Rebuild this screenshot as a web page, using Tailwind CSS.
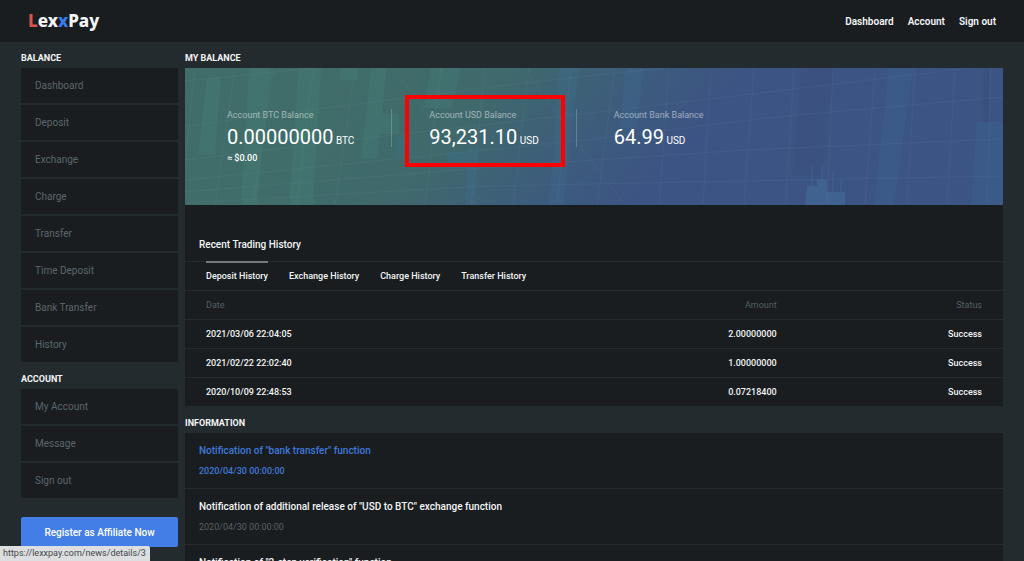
<!DOCTYPE html>
<html lang="en">
<head>
    <meta charset="UTF-8">
    <meta name="viewport" content="width=device-width, initial-scale=1.0">
    <title>LexxPay</title>
    <script src="https://cdn.jsdelivr.net/npm/@tailwindcss/browser@4"></script>
</head>
<body class="h-screen overflow-hidden bg-[#242b2e] font-['Roboto',sans-serif] text-[9px] font-medium text-gray-100">

    <header class="flex h-[42px] items-center justify-between bg-[#1a1d20] px-7">
        <a href="#" class="font-['Noto_Sans',sans-serif] text-[17px] leading-6 font-extrabold"><span class="text-[#d9534a]">L</span>ex<span class="text-[#3b7cea]">x</span>Pay</a>
        <nav class="flex gap-[14px] text-[10px] font-semibold">
            <a href="#">Dashboard</a>
            <a href="#">Account</a>
            <a href="#">Sign out</a>
        </nav>
    </header>

    <div class="flex gap-[7px] px-[21px]">
        <!-- sidebar -->
        <aside class="w-[157px] shrink-0">
            <h2 class="pt-[6px] leading-5 font-bold">BALANCE</h2>
            <ul class="divide-y-2 divide-[#242b2e] bg-[#191d1f] text-[10px] font-normal text-[#5c666e]">
                <li><a href="#" class="block px-[14px] leading-[35px]">Dashboard</a></li>
                <li><a href="#" class="block px-[14px] leading-[35px]">Deposit</a></li>
                <li><a href="#" class="block px-[14px] leading-[35px]">Exchange</a></li>
                <li><a href="#" class="block px-[14px] leading-[35px]">Charge</a></li>
                <li><a href="#" class="block px-[14px] leading-[35px]">Transfer</a></li>
                <li><a href="#" class="block px-[14px] leading-[35px]">Time Deposit</a></li>
                <li><a href="#" class="block px-[14px] leading-[35px]">Bank Transfer</a></li>
                <li><a href="#" class="block px-[14px] leading-[35px]">History</a></li>
            </ul>
            <h2 class="pt-[7px] leading-5 font-bold">ACCOUNT</h2>
            <ul class="divide-y-2 divide-[#242b2e] bg-[#191d1f] text-[10px] font-normal text-[#5c666e]">
                <li><a href="#" class="block px-[14px] leading-[35px]">My Account</a></li>
                <li><a href="#" class="block px-[14px] leading-[35px]">Message</a></li>
                <li><a href="#" class="block px-[14px] leading-[35px]">Sign out</a></li>
            </ul>
            <button class="mt-[19px] h-[30px] w-full rounded-xs bg-[#437ee6] text-[10px] text-white">Register as Affiliate Now</button>
        </aside>

        <main class="min-w-0 flex-1">
            <h2 class="pt-[6px] leading-5 font-bold">MY BALANCE</h2>
            <section class="relative flex h-[137px] overflow-hidden bg-[#3c5684] px-[42px] pt-[41px]">
                <svg class="absolute inset-0 h-full w-full" viewBox="0 0 818 137" preserveAspectRatio="none" aria-hidden="true">
                    <defs>
                        <linearGradient id="base" gradientUnits="userSpaceOnUse" x1="150" y1="0" x2="430" y2="240">
                            <stop offset="0" stop-color="#406d69"/>
                            <stop offset=".36" stop-color="#3f696c"/>
                            <stop offset=".64" stop-color="#3d5c7c"/>
                            <stop offset=".85" stop-color="#3c5483"/>
                        </linearGradient>
                    </defs>
                    <rect width="818" height="137" fill="url(#base)"/>
                    <!-- candle shadows -->
                    <g fill="#4c8f80" opacity=".2">
                        <path d="M22 10h14l-6 76H13z"/>
                        <path d="M64 0h22l-14 137H56z"/>
                        <path d="M114 0h22l-8 137h-24z"/>
                        <path d="M155 0h18v12h-18z"/>
                        <path d="M186 0h16l-10 90h-16z"/>
                        <path d="M246 0h30l-9 40h-28z"/>
                        <path d="M194 46h20v20h-26z"/>
                    </g>
                    <g fill="#3d7ba6" opacity=".16">
                        <path d="M210 70h18v20h-18z"/>
                        <path d="M262 84h22l-2 16h-20z"/>
                        <path d="M282 80h12l-4 57h-10z"/>
                        <path d="M374 0h20l-16 137h-14z"/>
                        <path d="M440 0h18l-6 60h-16z"/>
                        <path d="M704 0h24l-19 137h-20z"/>
                        <path d="M792 54h26v83h-32z"/>
                    </g>
                    <path d="M616 0h32l-12 108h-28z" fill="#383f68" opacity=".14"/>
                    <path d="M798 0h6v54h-6z" fill="#383f68" opacity=".2"/>
                    <path d="M622 118h10v-6h10v12h18v13h-40z" fill="#4578a8" opacity=".4"/>
                    <path d="M627 98v20M637 98v14M648 105v19M656 110v14" stroke="#4578a8" stroke-width="1" opacity=".4"/>
                    <!-- chart grid -->
                    <g fill="none" stroke="#8fa9c4" stroke-width="1" opacity=".08">
                        <path d="M0 13L130 0M0 58L330 16L480 0M0 92L200 68L500 34L818 -4M0 112L400 72L600 48L818 29M0 124L320 98L560 82L818 71M0 135L300 118L560 113L818 108"/>
                        <path d="M10 0L0 100M50 0L30 137M88 0L68 137M128 0L112 137M170 0L150 137M256 0L240 137M300 0L286 137M344 0L328 137M386 0L372 137M430 0L412 137M484 0L474 137M526 0L518 137M569 0L559 137M609 0L601 137M648 0L642 137M690 0L680 137M730 0L722 137M770 0L762 137M806 0L802 137"/>
                        <path d="M208 0L250 56M346 10L398 82L440 137"/>
                    </g>
                </svg>
                <div class="relative">
                    <p class="font-normal leading-3 text-white/50">Account BTC Balance</p>
                    <p class="mt-1 text-[10px] font-normal leading-6 text-white"><span class="text-xl leading-6">0.00000000</span> BTC</p>
                    <p class="leading-[10px] text-white">≈ $0.00</p>
                </div>
                <div class="relative mx-[37px] h-[38px] w-px shrink-0 bg-white/20"></div>
                <div class="relative">
                    <p class="font-normal leading-3 text-white/50">Account USD Balance</p>
                    <p class="mt-1 text-[10px] font-normal leading-6 text-white"><span class="text-xl leading-6">93,231.10</span> USD</p>
                    <div class="absolute -top-[14px] -right-[26px] -left-6 h-[72px] border-[4px] border-[#ff0000]"></div>
                </div>
                <div class="relative mx-[37px] h-[38px] w-px shrink-0 bg-white/20"></div>
                <div class="relative">
                    <p class="font-normal leading-3 text-white/50">Account Bank Balance</p>
                    <p class="mt-1 text-[10px] font-normal leading-6 text-white"><span class="text-xl leading-6">64.99</span> USD</p>
                </div>
            </section>

            <section class="bg-[#191d1f] pt-6">
                <h3 class="border-b border-[#242a2d] px-[14px] text-[10px] leading-8">Recent Trading History</h3>
                <div class="-mt-px flex gap-[21px] border-b border-[#242a2d] px-[21px] leading-[27px]">
                    <a href="#" class="border-t-2 border-[#74787b]">Deposit History</a>
                    <a href="#" class="border-t-2 border-transparent">Exchange History</a>
                    <a href="#" class="border-t-2 border-transparent">Charge History</a>
                    <a href="#" class="border-t-2 border-transparent">Transfer History</a>
                </div>
                <table class="w-full table-fixed leading-7">
                    <thead class="text-[#545d64]">
                        <tr class="border-b border-[#242a2d]">
                            <th class="w-1/3 pl-[21px] text-left font-normal">Date</th>
                            <th class="w-[39%] text-right font-normal">Amount</th>
                            <th class="pr-[21px] text-right font-normal">Status</th>
                        </tr>
                    </thead>
                    <tbody class="divide-y divide-[#242a2d]">
                        <tr>
                            <td class="pl-[21px]">2021/03/06 22:04:05</td>
                            <td class="text-right">2.00000000</td>
                            <td class="pr-[21px] text-right">Success</td>
                        </tr>
                        <tr>
                            <td class="pl-[21px]">2021/02/22 22:02:40</td>
                            <td class="text-right">1.00000000</td>
                            <td class="pr-[21px] text-right">Success</td>
                        </tr>
                        <tr>
                            <td class="pl-[21px]">2020/10/09 22:48:53</td>
                            <td class="text-right">0.07218400</td>
                            <td class="pr-[21px] text-right">Success</td>
                        </tr>
                    </tbody>
                </table>
            </section>

            <h2 class="pt-[7px] leading-5 font-bold">INFORMATION</h2>
            <section class="divide-y divide-[#242a2d] bg-[#191d1f]">
                <a href="#" class="block px-[14px] pt-2 pb-[7px] text-[#3f78dc]">
                    <p class="text-[10px] leading-5">Notification of "bank transfer" function</p>
                    <p class="leading-5">2020/04/30 00:00:00</p>
                </a>
                <a href="#" class="block px-[14px] pt-2 pb-[7px]">
                    <p class="text-[10px] leading-5">Notification of additional release of "USD to BTC" exchange function</p>
                    <p class="leading-5 font-normal text-[#5c6063]">2020/04/30 00:00:00</p>
                </a>
                <a href="#" class="block px-[14px] pt-2 pb-[7px]">
                    <p class="text-[10px] leading-5">Notification of "2-step verification" function</p>
                    <p class="leading-5 font-normal text-[#5c6063]">2020/04/30 00:00:00</p>
                </a>
            </section>
        </main>
    </div>

    <!-- link status bubble -->
    <div class="fixed bottom-0 left-0 rounded-tr-xs bg-[#dcdee0] pr-1 pl-[3px] text-[9px] leading-[15px] font-normal text-[#44484b]">https://lexxpay.com/news/details/3</div>

</body>
</html>
